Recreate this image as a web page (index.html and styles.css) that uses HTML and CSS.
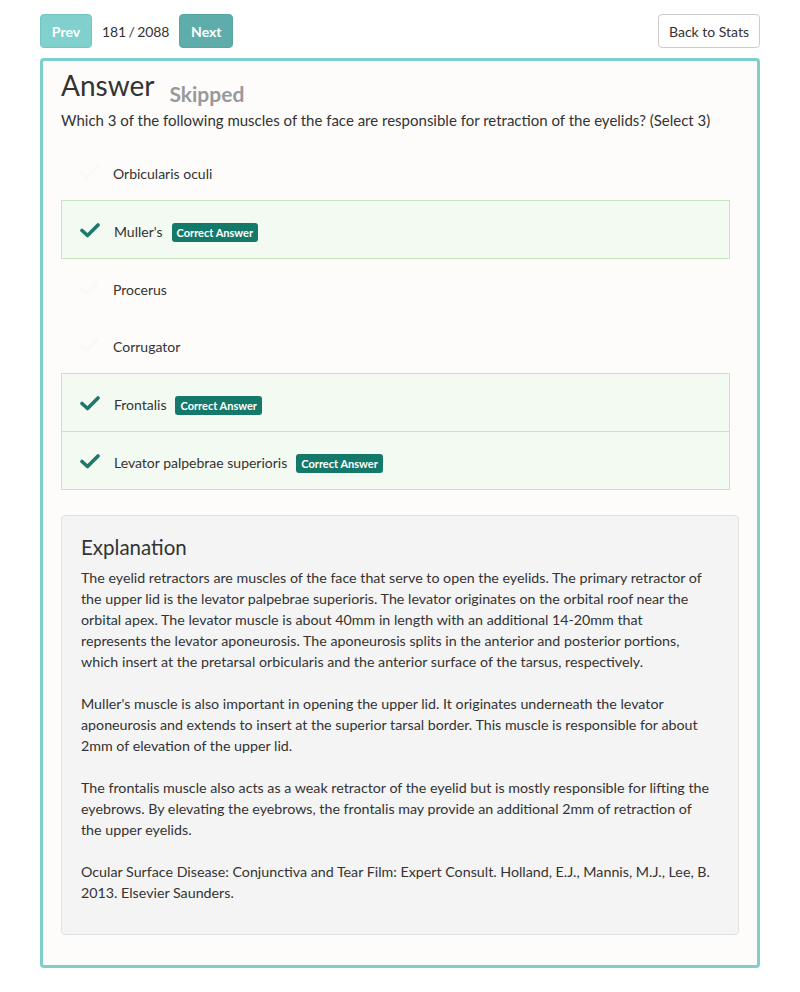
FILE: index.html
```html
<!DOCTYPE html>
<html>
<head>
<meta charset="utf-8">
<link rel="stylesheet" href="styles.css">
</head>
<body>
<div class="page">
  <div class="toolbar">
    <div class="nav">
      <button class="btn btn-prev">Prev</button>
      <span class="counter">181 / 2088</span>
      <button class="btn btn-next">Next</button>
    </div>
    <button class="btn btn-back">Back to Stats</button>
  </div>
  <div class="panel">
    <div class="title-row">
      <h2 class="title">Answer</h2>
      <span class="status">Skipped</span>
    </div>
    <p class="question">Which 3 of the following muscles of the face are responsible for retraction of the eyelids? (Select 3)</p>
    <ul class="options">
      <li class="option">
        <svg class="check faint" viewBox="0 0 20 16"><path d="M2 8.5 L7.5 13.5 L18 3" fill="none" stroke="currentColor" stroke-width="3.6" stroke-linecap="round" stroke-linejoin="round"/></svg>
        <span class="label">Orbicularis oculi</span>
      </li>
      <li class="option correct">
        <svg class="check" viewBox="0 0 20 16"><path d="M2 8.5 L7.5 13.5 L18 3" fill="none" stroke="currentColor" stroke-width="3.6" stroke-linecap="round" stroke-linejoin="round"/></svg>
        <span class="label">Muller's</span>
        <span class="badge">Correct Answer</span>
      </li>
      <li class="option">
        <svg class="check faint" viewBox="0 0 20 16"><path d="M2 8.5 L7.5 13.5 L18 3" fill="none" stroke="currentColor" stroke-width="3.6" stroke-linecap="round" stroke-linejoin="round"/></svg>
        <span class="label">Procerus</span>
      </li>
      <li class="option">
        <svg class="check faint" viewBox="0 0 20 16"><path d="M2 8.5 L7.5 13.5 L18 3" fill="none" stroke="currentColor" stroke-width="3.6" stroke-linecap="round" stroke-linejoin="round"/></svg>
        <span class="label">Corrugator</span>
      </li>
      <li class="option correct">
        <svg class="check" viewBox="0 0 20 16"><path d="M2 8.5 L7.5 13.5 L18 3" fill="none" stroke="currentColor" stroke-width="3.6" stroke-linecap="round" stroke-linejoin="round"/></svg>
        <span class="label">Frontalis</span>
        <span class="badge">Correct Answer</span>
      </li>
      <li class="option correct">
        <svg class="check" viewBox="0 0 20 16"><path d="M2 8.5 L7.5 13.5 L18 3" fill="none" stroke="currentColor" stroke-width="3.6" stroke-linecap="round" stroke-linejoin="round"/></svg>
        <span class="label">Levator palpebrae superioris</span>
        <span class="badge">Correct Answer</span>
      </li>
    </ul>
    <div class="explanation">
      <h3 class="exp-title">Explanation</h3>
      <p>The eyelid retractors are muscles of the face that serve to open the eyelids. The primary retractor of the upper lid is the levator palpebrae superioris. The levator originates on the orbital roof near the orbital apex. The levator muscle is about 40mm in length with an additional 14-20mm that represents the levator aponeurosis. The aponeurosis splits in the anterior and posterior portions, which insert at the pretarsal orbicularis and the anterior surface of the tarsus, respectively.</p>
      <p>Muller's muscle is also important in opening the upper lid. It originates underneath the levator aponeurosis and extends to insert at the superior tarsal border. This muscle is responsible for about 2mm of elevation of the upper lid.</p>
      <p>The frontalis muscle also acts as a weak retractor of the eyelid but is mostly responsible for lifting the eyebrows. By elevating the eyebrows, the frontalis may provide an additional 2mm of retraction of the upper eyelids.</p>
      <p>Ocular Surface Disease: Conjunctiva and Tear Film: Expert Consult. Holland, E.J., Mannis, M.J., Lee, B. 2013. Elsevier Saunders.</p>
    </div>
  </div>
</div>
</body>
</html>
```
FILE: styles.css
```css
* { box-sizing: border-box; }
html, body { margin: 0; padding: 0; background: #fff; }
body {
  font-family: Lato, "Open Sans", sans-serif;
  color: #333;
}
.page {
  padding: 14px 40px 0 40px;
  width: 800px;
}
.toolbar {
  display: flex;
  justify-content: space-between;
  align-items: center;
  height: 34px;
}
.nav {
  display: flex;
  align-items: center;
}
.btn {
  font-family: Lato, sans-serif;
  height: 34px;
  border-radius: 4px;
  font-size: 14px;
  cursor: pointer;
}
.btn-prev, .btn-next {
  border: 1px solid transparent;
  color: #fff;
  font-weight: 700;
  padding: 0;
}
.btn-prev { background: #80d0ce; border-color: #74c4c2; width: 52px; }
.btn-next { background: #5fadaa; border-color: #58a5a2; width: 54px; }
.counter {
  font-size: 14px;
  color: #333;
  margin: 0 10px;
  word-spacing: -1px;
  letter-spacing: -0.1px;
}
.btn-back {
  background: #fff;
  border: 1px solid #ccc;
  color: #333;
  width: 102px;
  padding: 0;
}
.panel {
  margin-top: 10px;
  border: 3px solid #7ecfcb;
  border-radius: 4px;
  background: #fdfcfa;
  padding: 5px 27px 30px 18px;
  height: 910px;
}
.title-row {
  display: flex;
  align-items: baseline;
  height: 38px;
}
.title {
  margin: 0;
  font-size: 28px;
  font-weight: 400;
  color: #333;
  line-height: 38px;
}
.status {
  margin-left: 15px;
  font-size: 21px;
  font-weight: 700;
  color: #999;
  position: relative;
  top: 6px;
}
.question {
  margin: 6px 0 0 0;
  font-size: 15px;
  line-height: 20px;
}
.options {
  list-style: none;
  margin: 13px 0 0 0;
  padding: 0;
}
.option {
  display: flex;
  align-items: center;
  height: 57px;
  padding-left: 18px;
  padding-top: 4px;
  font-size: 14px;
}
.option.correct {
  background: #f3faf1;
  border: 1px solid #c4e5bd;
  height: 59px;
}
.option.correct + .option.correct { border-top: 0; height: 58px; }
.check {
  width: 20px;
  height: 16px;
  color: #1c7a6c;
  margin-right: 14px;
  flex: none;
  position: relative;
  top: -2px;
}
.check.faint { color: #f9f9f7; }
.label { color: #333; }
.badge {
  margin-left: 9px;
  background: #15796a;
  color: #fff;
  font-size: 11px;
  font-weight: 700;
  padding: 0 5px;
  height: 19px;
  line-height: 19px;
  border-radius: 3px;
  position: relative;
  top: 1px;
}
.explanation {
  margin-top: 25px;
  margin-right: -9px;
  background: #f4f4f4;
  border: 1px solid #e0e0e0;
  border-radius: 4px;
  padding: 17px 28px 22px 19px;
  height: 420px;
}
.exp-title {
  margin: 0 0 6px 0;
  font-size: 20.5px;
  font-weight: 400;
  line-height: 28px;
  color: #333;
}
.explanation p {
  margin: 0 0 21px 0;
  font-size: 14.25px;
  line-height: 21px;
  color: #333;
}
```
